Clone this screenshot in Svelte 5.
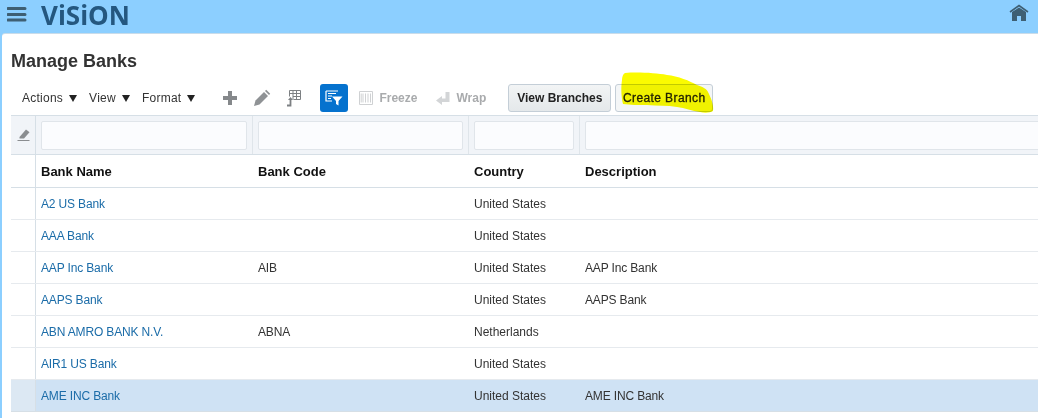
<script>
  const rows = [
    { name: 'A2 US Bank', code: '', country: 'United States', desc: '' },
    { name: 'AAA Bank', code: '', country: 'United States', desc: '' },
    { name: 'AAP Inc Bank', code: 'AIB', country: 'United States', desc: 'AAP Inc Bank' },
    { name: 'AAPS Bank', code: '', country: 'United States', desc: 'AAPS Bank' },
    { name: 'ABN AMRO BANK N.V.', code: 'ABNA', country: 'Netherlands', desc: '' },
    { name: 'AIR1 US Bank', code: '', country: 'United States', desc: '' },
    { name: 'AME INC Bank', code: '', country: 'United States', desc: 'AME INC Bank', selected: true }
  ];
  const menus = ['Actions', 'View', 'Format'];
</script>

<div class="page">
  <header class="top">
    <div class="brand">
      <svg class="burger" width="20" height="15" viewBox="0 0 20 15"><path d="M1 1.500h17M1 7.500h17M1 13h17" stroke="#3e5f73" stroke-width="3" stroke-linecap="round" fill="none"/></svg>
      <span class="logo">ViSiON</span>
    </div>
    <svg class="home" width="20" height="18" viewBox="0 0 20 18"><path d="M1 8 L10 1.500 L19 8" fill="none" stroke="#3e5f73" stroke-width="1.600"/><path d="M3 8 L10 3.500 L17 8 V17 H12 V12 H8 V17 H3 Z" fill="#3e5f73"/></svg>
  </header>

  <main class="panel">
    <h1>Manage Banks</h1>
    <div class="toolbar">
      <div class="menus">
        {#each menus as m}
          <span class="menu">{m}<i class="caret"></i></span>
        {/each}
      </div>
      <div class="icons">
        <svg width="16" height="16" viewBox="0 0 16 16"><path d="M8 1v14M1 8h14" stroke="#85888b" stroke-width="4"/></svg>
        <svg width="18" height="18" viewBox="0 0 18 18"><path d="M1 17l1.500-5.500L11 3l4 4-8.500 8.500Z" fill="#8f9295"/><path d="M12 2l1.200-1.200 4 4L16 6Z" fill="#8f9295"/></svg>
        <svg width="16" height="18" viewBox="0 0 16 18"><path d="M3.500 1.500h11v9h-7M3.500 1.500v6M3.500 4.500h11M7 1.500v9M10.500 1.500v9M7 7.500h7.500" stroke="#7d8083" fill="none"/><path d="M1 16.500h3.500v-6" stroke="#7d8083" stroke-width="1.800" fill="none"/><path d="M2 11l2.500-3 2.500 3z" fill="#7d8083"/></svg>
      </div>
      <button class="filter" aria-label="Query by example">
        <svg width="18" height="16" viewBox="0 0 18 16"><path d="M1 1h12M1 1v10h6M3 3.500h8M3 6h4M3 8.500h3" stroke="#fff" stroke-width="1.200" fill="none"/><path d="M7 6.500h10.500l-4 4.500V15.500l-2.500-1.500v-3z" fill="#fff"/></svg>
      </button>
      <span class="dis freeze">
        <svg width="14" height="14" viewBox="0 0 14 14"><path d="M.5.500h13v13H.5zM4 2.500v9M6.500 2.500v9M9 2.500v9M11.500 2.500v9M2.200 2.500v9" stroke="#cfd1d3" fill="none"/></svg>
        Freeze
      </span>
      <span class="dis wrap">
        <svg width="14" height="14" viewBox="0 0 14 14"><path d="M9.500 1h4v10H6v3L0 9.500 6 5v2.500h3.500z" fill="#d3d5d7"/></svg>
        Wrap
      </span>
      <button class="btn first">View Branches</button>
      <div class="create">
        <svg class="marker" width="95" height="42" viewBox="0 0 95 42"><path d="M5 1 C18 0 36 1 47 3 C58 4 70 9 77 13 C83 15 87 17 88 20 C91 26 94 33 93 39 C90 41 84 41 80 40 C72 39 65 36 57 35 C47 33 37 34 27 33 C18 33 10 33 3 32 C1 24 1 14 2 8 C2 5 3 2 5 1 Z" fill="#fbfb00"/></svg>
        <button class="btn second">Create Branch</button>
      </div>
    </div>

    <div class="table">
      <div class="row filters">
        <div class="gut">
          <svg width="13" height="14" viewBox="0 0 13 14"><path d="M2.500 9L9 1.500l3.500 2.800L7 10.500H2.500z" fill="#8a8d90"/><path d="M0.500 12.500h12" stroke="#8a8d90"/></svg>
        </div>
        {#each [0, 1, 2, 3] as c}
          <div class="fcell"><span class="input"></span></div>
        {/each}
      </div>
      <div class="row head">
        <div class="gut"></div>
        <div class="cell">Bank Name</div>
        <div class="cell">Bank Code</div>
        <div class="cell">Country</div>
        <div class="cell">Description</div>
      </div>
      {#each rows as r}
        <div class="row data" class:selected={r.selected}>
          <div class="gut"></div>
          <div class="cell tight"><a href="#top">{r.name}</a></div>
          <div class="cell tight">{r.code}</div>
          <div class="cell">{r.country}</div>
          <div class="cell tight">{r.desc}</div>
        </div>
      {/each}
    </div>
  </main>
</div>

<style>
  :global(body) {
    margin: 0;
    background: #8ccfff;
    overflow: hidden;
  }
  .page {
    width: 1038px;
    height: 418px;
    overflow: hidden;
    font-family: "Liberation Sans", Arial, sans-serif;
    color: #333;
  }
  .top {
    height: 34px;
    display: flex;
    justify-content: space-between;
    align-items: flex-start;
    padding: 0 9px 0 7px;
    box-sizing: border-box;
  }
  .brand {
    display: flex;
    align-items: flex-start;
    gap: 14px;
  }
  .burger {
    margin-top: 7px;
  }
  .logo {
    font-family: "Open Sans", sans-serif;
    font-weight: 700;
    font-size: 26px;
    line-height: 30px;
    color: #24577f;
    letter-spacing: 0;
  }
  .home {
    margin-top: 4px;
  }
  .panel {
    margin-left: 2px;
    height: 384px;
    background: #fff;
    border-top-left-radius: 3px;
    padding-left: 9px;
    box-shadow: 0 -1px 0 #c9dcea;
  }
  h1 {
    margin: 0;
    padding-top: 17px;
    font-size: 18px;
    line-height: 21px;
    font-weight: 700;
    color: #333;
  }
  .toolbar {
    display: flex;
    align-items: center;
    height: 28px;
    margin-top: 12px;
    padding-left: 11px;
  }
  .menus {
    display: flex;
    gap: 12px;
  }
  .menu {
    font-size: 12px;
    letter-spacing: 0.25px;
    color: #333;
    display: inline-flex;
    align-items: center;
    gap: 6px;
  }
  .caret {
    width: 0;
    height: 0;
    border-left: 4.500px solid transparent;
    border-right: 4.500px solid transparent;
    border-top: 7px solid #222;
    margin-top: 1px;
  }
  .icons {
    display: flex;
    align-items: center;
    gap: 15px;
    margin-left: 27px;
  }
  .filter {
    width: 28px;
    height: 28px;
    margin-left: 18px;
    padding: 0;
    border: 0;
    border-radius: 3px;
    background: #0572ce;
    display: flex;
    align-items: center;
    justify-content: center;
  }
  .dis {
    font-size: 12px;
    font-weight: 700;
    color: #a9abad;
    display: inline-flex;
    align-items: center;
    gap: 6px;
  }
  .freeze {
    margin-left: 11px;
  }
  .wrap {
    margin-left: 19px;
  }
  .btn {
    height: 28px;
    box-sizing: border-box;
    border: 1px solid #c4ced7;
    border-radius: 3px;
    background: linear-gradient(#f2f4f5, #e4e8ea);
    font-family: inherit;
    font-size: 12px;
    font-weight: 700;
    color: #222;
    padding: 0;
  }
  .first {
    width: 103px;
    margin-left: 22px;
  }
  .create {
    position: relative;
    margin-left: 4px;
    width: 98px;
    height: 28px;
  }
  .second {
    width: 98px;
    background: #f4f6f7;
    font-weight: 400;
    letter-spacing: 0.4px;
    -webkit-text-stroke: 0.300px #222;
    position: relative;
  }
  .marker {
    position: absolute;
    left: 5px;
    top: -12px;
    z-index: 2;
    mix-blend-mode: multiply;
  }
  .table {
    margin-top: 3px;
    border-top: 1px solid #d6dfe6;
    overflow: hidden;
  }
  .row {
    display: grid;
    grid-template-columns: 25px 217px 216px 111px 1fr;
    box-sizing: border-box;
  }
  .gut {
    border-right: 1px solid #d6dfe6;
    background: #f1f4f8;
    display: flex;
    align-items: center;
    justify-content: center;
  }
  .filters {
    height: 39px;
    background: #f1f4f8;
    border-bottom: 1px solid #d6dfe6;
  }
  .fcell {
    border-right: 1px solid #dfe5ea;
    padding: 5px 5px 4px;
    display: flex;
  }
  .fcell:last-child {
    border-right: 0;
    padding-right: 0;
  }
  .input {
    flex: 1;
    background: #fbfcfe;
    border: 1px solid #e0e5ea;
    border-radius: 2px;
  }
  .fcell:last-child .input {
    margin-right: -6px;
  }
  .head {
    height: 33px;
    border-bottom: 1px solid #d6dfe6;
    font-size: 13px;
    font-weight: 700;
    color: #111;
  }
  .head .gut, .data .gut {
    background: #fff;
  }
  .cell {
    padding-left: 5px;
    display: flex;
    align-items: center;
    white-space: nowrap;
  }
  .tight {
    letter-spacing: -0.15px;
  }
  .data {
    height: 32px;
    border-bottom: 1px solid #e6eaee;
    font-size: 12px;
    color: #333;
  }
  .data a {
    color: #1b6ca8;
    text-decoration: none;
  }
  .data.selected {
    background: #cfe2f4;
    border-bottom-color: #d6dfe6;
    border-top: 1px solid #e6eaee;
    margin-top: -1px;
    height: 33px;
  }
  .data.selected .gut {
    background: #dce8f3;
  }
</style>
